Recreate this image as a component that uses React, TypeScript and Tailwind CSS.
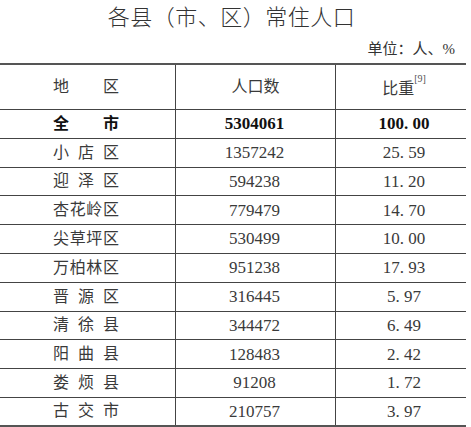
import React from "react";

const cjk = { fontFamily: '"Liberation Serif", "Noto Sans CJK SC", serif' };

const rows = [
  { name: "小店区", pop: "1357242", pct: "25.59" },
  { name: "迎泽区", pop: "594238", pct: "11.20" },
  { name: "杏花岭区", pop: "779479", pct: "14.70" },
  { name: "尖草坪区", pop: "530499", pct: "10.00" },
  { name: "万柏林区", pop: "951238", pct: "17.93" },
  { name: "晋源区", pop: "316445", pct: "5.97" },
  { name: "清徐县", pop: "344472", pct: "6.49" },
  { name: "阳曲县", pop: "128483", pct: "2.42" },
  { name: "娄烦县", pop: "91208", pct: "1.72" },
  { name: "古交市", pop: "210757", pct: "3.97" },
];

function Spread({ text }: { text: string }) {
  return (
    <div className="ml-[53px] w-[66px] flex justify-between">
      {text.split("").map((c, i) => (
        <span key={i}>{c}</span>
      ))}
    </div>
  );
}

function Num({ value }: { value: string }) {
  const [a, b] = value.split(".");
  if (b === undefined) return <span>{value}</span>;
  return (
    <span>
      {a}
      <span className="mr-[0.25em]">.</span>
      {b}
    </span>
  );
}

function Row({
  name,
  pop,
  pct,
  bold,
  last,
}: {
  name: string;
  pop: string;
  pct: string;
  bold?: boolean;
  last?: boolean;
}) {
  return (
    <div
      className={`grid grid-cols-[176px_160px_130px] h-[28.8px] ${
        last ? "border-b-2 border-[#555]" : "border-b border-[#444]"
      } ${bold ? "font-bold text-[#111]" : "text-[#3a3a3a]"}`}
    >
      <div className="flex items-center text-[16px] border-r border-[#444]">
        <Spread text={name} />
      </div>
      <div className="flex items-center justify-center text-[17px] border-r border-[#444] pr-[2px]">
        <Num value={pop} />
      </div>
      <div className="flex items-center justify-center text-[17px] pl-[6px]">
        <Num value={pct} />
      </div>
    </div>
  );
}

export default function App() {
  return (
    <div className="w-[471px] h-[427px] bg-white overflow-hidden" style={cjk}>
      <div className="h-[63px] w-[466px]">
        <h1 className="pt-[4px] text-center text-[22px] leading-[28px] tracking-[0.5px] font-light text-[#333] pr-[3px]">
          各县（市、区）常住人口
        </h1>
        <div className="mt-[7px] text-right text-[15px] leading-[20px] text-[#333] pr-[11px]">
          单位：人、%
        </div>
      </div>
      <div className="w-[466px] border-t-2 border-[#555]">
        <div className="grid grid-cols-[176px_160px_130px] h-[45px] border-b border-[#444] text-[#3a3a3a]">
          <div className="flex items-center text-[16px] border-r border-[#444]">
            <Spread text="地区" />
          </div>
          <div className="flex items-center justify-center text-[16px] border-r border-[#444]">
            人口数
          </div>
          <div className="flex items-center justify-center text-[16px] pl-[6px]">
            <span className="mt-[4px]">比重</span>
            <sup className="text-[10px] -mt-[6px] text-[#555]">[9]</sup>
          </div>
        </div>
        <Row name="全市" pop="5304061" pct="100.00" bold />
        {rows.map((r, i) => (
          <Row key={r.name} {...r} last={i === rows.length - 1} />
        ))}
      </div>
    </div>
  );
}
